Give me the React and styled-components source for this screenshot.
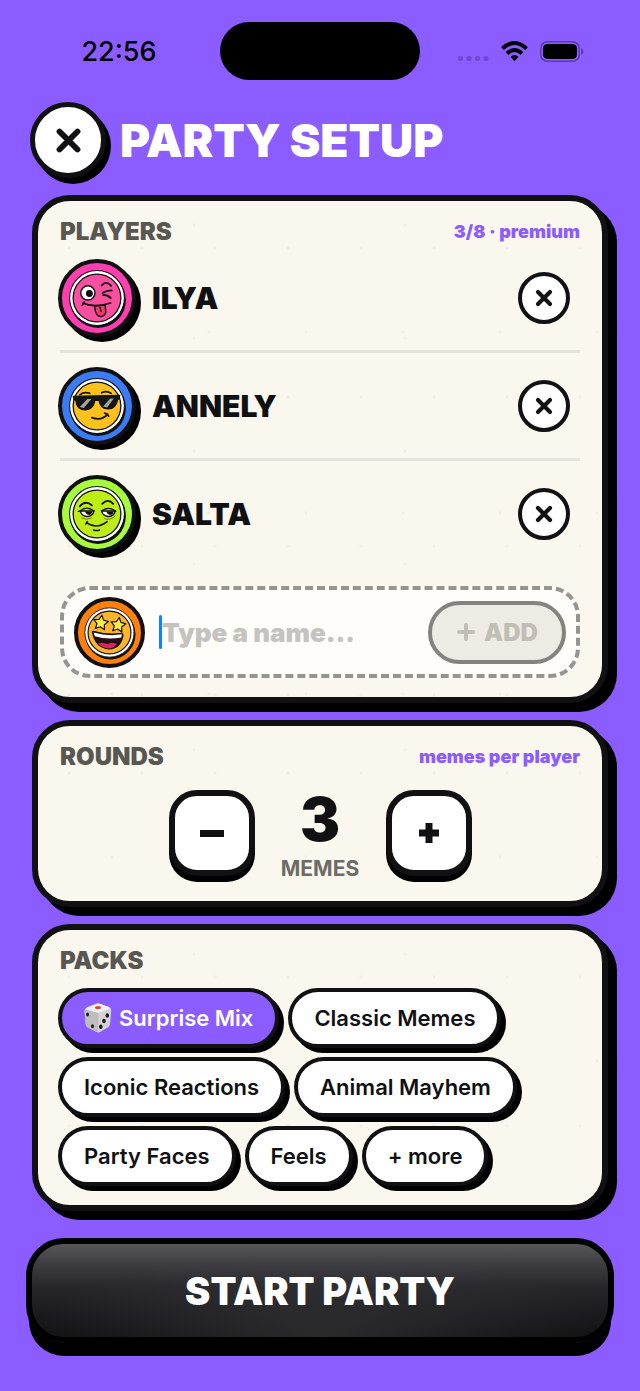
import { useState } from 'react';
import styled, { createGlobalStyle } from 'styled-components';

const GlobalStyle = createGlobalStyle`
  * {
    box-sizing: border-box;
  }
  body {
    margin: 0;
    background-color: #8b5cff;
    font-family: Inter, "Liberation Sans", sans-serif;
    color: #111113;
  }
  button, input {
    font-family: inherit;
    color: inherit;
    padding: 0;
  }
  button {
    cursor: pointer;
  }
`;

const Page = styled.div`
  display: flex;
  flex-direction: column;
  min-height: 100vh;
  padding: 0 32px 48px;
`;
const StatusBar = styled.div`
  display: grid;
  grid-template-columns: 1fr 200px 1fr;
  align-items: center;
  justify-items: center;
  height: 102px;
  margin: 0 -14px;
  color: black;
`;
const Clock = styled.time`
  font-size: 27px;
  font-weight: 500;
`;
const Island = styled.div`
  width: 200px;
  height: 58px;
  border-radius: 29px;
  background-color: black;
`;
const StatusIcons = styled.div`
  display: flex;
  align-items: center;
  gap: 12px;
`;
const TitleRow = styled.header`
  display: flex;
  align-items: center;
  gap: 14px;
  margin: 0 0 17px -2px;
`;
const CloseButton = styled.button`
  display: flex;
  align-items: center;
  justify-content: center;
  flex-shrink: 0;
  width: 76px;
  height: 76px;
  border: 5px solid #111113;
  border-radius: 50%;
  background-color: white;
  box-shadow: 5px 6px 0 black;
`;
const Title = styled.h1`
  margin: 0;
  color: white;
  font-size: 46px;
  line-height: 52px;
  font-weight: 900;
`;
const Card = styled.section`
  margin-bottom: 17px;
  padding: 18px 22px 19px;
  border: 6px solid #111113;
  border-radius: 38px;
  background-color: #faf7ef;
  background-image:
    radial-gradient(circle at 31px 47px, #f0ede5 1px, transparent 2px),
    radial-gradient(circle at 118px 92px, #f0ede5 1px, transparent 2px),
    radial-gradient(circle at 74px 131px, #f0ede5 1px, transparent 2px),
    radial-gradient(circle at 156px 24px, #f0ede5 1px, transparent 2px);
  background-size: 73px 149px, 131px 67px, 97px 181px, 211px 113px;
  box-shadow: 9px 9px 0 black;
`;
const CardHeader = styled.div`
  display: flex;
  align-items: center;
  justify-content: space-between;
  height: 26px;
`;
const CardTitle = styled.h2`
  margin: 0;
  color: #595751;
  font-size: 24px;
  line-height: 26px;
  font-weight: 900;
`;
const CardNote = styled.span`
  color: #8b5cff;
  font-size: 18px;
  line-height: 26px;
  font-weight: 900;
`;
const PlayerList = styled.ul`
  margin: 0 0 20px;
  padding: 0;
  list-style: none;
`;
const PlayerRow = styled.li`
  display: flex;
  align-items: center;
  gap: 16px;
  height: 108px;
  padding-right: 10px;
  border-bottom: 3px solid #e5e3db;
  &:last-child {
    height: 105px;
    border-bottom: none;
  }
`;
const Avatar = styled.span`
  display: flex;
  flex-shrink: 0;
  width: ${(props) => (props.$small ? 71 : 78)}px;
  height: ${(props) => (props.$small ? 71 : 78)}px;
  margin-left: ${(props) => (props.$small ? 0 : -2)}px;
  border: 4px solid #111113;
  border-radius: 50%;
  background-color: ${(props) => props.$color};
  box-shadow: ${(props) => (props.$small ? 'none' : '5px 5px 0 black')};
  svg {
    width: 100%;
    height: 100%;
  }
`;
const PlayerName = styled.span`
  flex: 1;
  font-size: 30px;
  font-weight: 900;
`;
const RemoveButton = styled.button`
  display: flex;
  align-items: center;
  justify-content: center;
  width: 52px;
  height: 52px;
  border: 4px solid #111113;
  border-radius: 50%;
  background-color: white;
`;
const AddPlayer = styled.form`
  display: flex;
  align-items: center;
  height: 92px;
  padding: 0 10px;
  border: 4px dashed #959490;
  border-radius: 30px;
  background-color: #fefdf9;
`;
const Caret = styled.span`
  flex-shrink: 0;
  width: 3px;
  height: 34px;
  margin-left: 14px;
  border-radius: 2px;
  background-color: #0a84ff;
`;
const NameInput = styled.input`
  flex: 1;
  min-width: 0;
  border: none;
  outline: none;
  background: none;
  font-size: 26px;
  font-weight: 900;
  &::placeholder {
    color: #c4c3bf;
    opacity: 1;
  }
`;
const AddButton = styled.button`
  display: flex;
  align-items: center;
  justify-content: center;
  gap: 8px;
  width: 138px;
  height: 63px;
  border: 4px solid #84837f;
  border-radius: 32px;
  background-color: #eeebe4;
  color: #c1beb6;
  font-size: 24px;
  font-weight: 900;
`;
const Stepper = styled.div`
  display: flex;
  align-items: flex-start;
  justify-content: center;
  gap: 26px;
  padding-top: 20px;
`;
const StepButton = styled.button`
  display: flex;
  align-items: center;
  justify-content: center;
  width: 86px;
  height: 86px;
  border: 6px solid #111113;
  border-radius: 28px;
  background-color: white;
  box-shadow: 0 6px 0 black;
`;
const StepValue = styled.div`
  display: flex;
  flex-direction: column;
  align-items: center;
  width: 79px;
`;
const StepNumber = styled.output`
  font-size: 60px;
  line-height: 58px;
  font-weight: 900;
`;
const StepUnit = styled.span`
  margin-top: 8px;
  color: #6d6b66;
  font-size: 21px;
  line-height: 26px;
  font-weight: 700;
`;
const PackList = styled.div`
  display: flex;
  flex-wrap: wrap;
  gap: 9px;
  margin: 14px 0 0 -2px;
`;
const PackChip = styled.button`
  display: flex;
  align-items: center;
  gap: 7px;
  height: 60px;
  padding: 0 22px;
  border: 4px solid #111113;
  border-radius: 30px;
  background-color: ${(props) => (props.$active ? '#8b5cff' : 'white')};
  color: ${(props) => (props.$active ? 'white' : '#111113')};
  font-size: 22px;
  font-weight: 600;
  box-shadow: 5px 5px 0 black;
`;
const StartButton = styled.button`
  height: 105px;
  margin: 10px -6px 0;
  border: 6px solid black;
  border-radius: 38px;
  background:
    radial-gradient(ellipse 50% 90% at 50% 100%, rgba(80, 80, 80, 0.4), transparent),
    linear-gradient(#58585b, #3f3f43 20%, #27272c 45%, #1b1b1f 75%, #111112);
  box-shadow: 0 8px 0 -2px black, 0 16px 0 -3px black;
  color: white;
  font-size: 38px;
  font-weight: 900;
`;

const Cross = ({ size, stroke }) => (
  <svg width={size} height={size} viewBox="0 0 24 24" fill="none" stroke="#111113" strokeWidth={stroke} strokeLinecap="round">
    <path d="M4 4L20 20M20 4L4 20" />
  </svg>
);

const starPoints = (cx, cy, r, turn) => {
  const points = [];
  for (let i = 0; i < 10; i++) {
    const radius = i % 2 ? r * 0.5 : r;
    const angle = ((i * 36 - 90 + turn) * Math.PI) / 180;
    points.push(`${(cx + radius * Math.cos(angle)).toFixed(1)},${(cy + radius * Math.sin(angle)).toFixed(1)}`);
  }
  return points.join(' ');
};

const WinkFace = () => (
  <>
    <circle cx="29.5" cy="33.5" r="7" fill="white" stroke="#111" strokeWidth="1.4" />
    <circle cx="31" cy="34" r="2.9" fill="#111" />
    <path d="M43 26Q48 21 52.5 26.5" strokeWidth="1.8" />
    <path d="M53 31Q48 31 44 33.6M44.5 35.5Q49 35.5 52 38.5" strokeWidth="1.8" />
    <path d="M36 46.5L37 52Q39 57.5 43.5 56.5Q48 55 47 50L46.5 45.5Z" fill="#f0386b" strokeWidth="1.4" />
    <path d="M41.5 47.5L42.5 52" strokeWidth="1.2" />
    <path d="M24.5 43.5Q35 48.5 52 43.5M24 45.5L26 42.5" strokeWidth="1.6" />
  </>
);

const CoolFace = () => (
  <>
    <path d="M21.5 27.5Q25.5 24 31.5 26M43 25.5Q48 23 52.5 26" strokeWidth="1.6" />
    <path d="M15 29L61 28L60.5 31.5L59 32Q57 42 49 41.5Q41.5 41 40.5 33H36.5Q35 42 27 42.5Q18.5 42.5 17.5 33L15.5 32Z" fill="#151515" strokeWidth="1" />
    <path d="M21.5 39.5L29 31.5H33L25.5 40.5ZM44.5 39L51.5 31H55L48.5 40Z" fill="#a2a2a2" stroke="none" />
    <path d="M33.5 50Q43 53.5 49 46.5M46 45.5Q49 46 50 48.5" strokeWidth="1.8" />
  </>
);

const SmugFace = () => (
  <>
    <path d="M21.5 31Q27 24.5 33.5 30M43.5 28.5Q49.5 22.5 54.5 28.5" strokeWidth="1.8" />
    <path d="M22 35.5H35.5Q34.5 41 28.5 41Q23 40.5 22 35.5ZM43 35.5H56.5Q55 41 49.5 41Q44 40.5 43 35.5Z" fill="white" strokeWidth="1.4" />
    <path d="M26.5 36H34Q33 39.5 30.5 39.5Q27.5 39 26.5 36ZM47.5 36H55Q54 39.5 51.5 39.5Q48.5 39 47.5 36Z" fill="#111" stroke="none" />
    <path d="M20 36L22 35.5Q28 30 35.5 35.5M43 35.5Q50 30 57 36" strokeWidth="1.2" />
    <path d="M23.5 42.5Q28 45 33 42.5M46 43Q51 45.5 56.5 40.5" strokeWidth="0.5" />
    <path d="M28 47Q38 54 48.5 46M27.5 48.5L29 46M35 54.2Q38 55.5 41 54.2" strokeWidth="1.5" />
  </>
);

const StarFace = () => (
  <>
    <polygon points={starPoints(29, 28, 8.5, 8)} fill="#ffee3d" strokeWidth="1.3" strokeLinejoin="round" />
    <polygon points={starPoints(48, 30.5, 8.5, 8)} fill="#ffee3d" strokeWidth="1.3" strokeLinejoin="round" />
    <path d="M20 38.5Q19 37 22 37.5Q37 42 52 39.5Q53.5 40 53 43Q50 56 38 56.5Q23 55 20 38.5Z" fill="#241015" strokeWidth="1.4" />
    <path d="M21 38.5Q37 43 52 40.5L51.5 44Q36 47 22.5 42.5Z" fill="white" stroke="none" />
    <path d="M26 50.5Q31 48.5 36 51.5Q41 48.5 46.5 51Q43 56 37.5 56Q30.5 55.5 26 50.5Z" fill="#d9275a" stroke="none" />
  </>
);

const faces = {
  wink: { ring: '#ff3eb0', skin: '#f94f9f', Drawing: WinkFace },
  cool: { ring: '#3b7cf5', skin: '#ffc21c', Drawing: CoolFace },
  smug: { ring: '#a8fb3c', skin: '#bfee16', Drawing: SmugFace },
  stars: { ring: '#ff800a', skin: '#fbb52b', Drawing: StarFace },
};

const PlayerAvatar = ({ face, small }) => {
  const { ring, skin, Drawing } = faces[face];
  return (
    <Avatar $color={ring} $small={small}>
      <svg viewBox="4 4 69 69" fill="none" stroke="#111" strokeLinecap="round" aria-hidden="true">
        <circle cx="39.5" cy="40.5" r="27.5" fill="#111" stroke="none" />
        <circle cx="38.5" cy="38.5" r="27" fill="white" strokeWidth="1" />
        <circle cx="38.5" cy="38.5" r="23.5" fill={skin} strokeWidth="1.3" />
        <Drawing />
      </svg>
    </Avatar>
  );
};

const Dice = () => (
  <svg width="28" height="30" viewBox="0 0 28 30" aria-hidden="true">
    <path d="M3 4.5L12.5 0.8Q14 0.3 15.5 0.8L25 4Q27.5 5 27.2 8L26 21Q25.8 23 24 24.2L16 29Q14.5 29.8 12.5 29L4 24.5Q2 23.5 1.7 21L0.5 8Q0.4 5.5 3 4.5Z" fill="#d4d4d6" />
    <path d="M1.5 6L13 9.5Q14.5 10 14.4 12L14 29.3L4 24.5Q2 23.5 1.7 21L0.5 8Q0.4 6.8 1.5 6Z" fill="#bdbdc0" />
    <path d="M3 4.5L12.5 0.8Q14 0.3 15.5 0.8L25 4Q26.5 5 25 6L16 9.2Q14 10 12 9.2L3 6.5Q1.5 5.5 3 4.5Z" fill="#f0f0f1" />
    <ellipse cx="14" cy="4.6" rx="3" ry="1.6" fill="#e4433a" />
    <g fill="#1b1b1d">
      <ellipse cx="3.6" cy="11.5" rx="1.4" ry="2" />
      <ellipse cx="8.5" cy="23.2" rx="1.4" ry="2" />
      <ellipse cx="23.3" cy="12.5" rx="1.8" ry="2.2" />
      <ellipse cx="20" cy="18" rx="1.8" ry="2.2" />
      <ellipse cx="16.8" cy="23.8" rx="1.8" ry="2.2" />
    </g>
  </svg>
);

const packs = ['Surprise Mix', 'Classic Memes', 'Iconic Reactions', 'Animal Mayhem', 'Party Faces', 'Feels', '+ more'];

function App() {

const [players, updatePlayers] = useState([
  { name: 'ILYA', face: 'wink' },
  { name: 'ANNELY', face: 'cool' },
  { name: 'SALTA', face: 'smug' },
]);
const [name, updateName] = useState('');
const [rounds, updateRounds] = useState(3);
const [selectedPack, onPackSelect] = useState('Surprise Mix');

const addPlayer = (event) => {
  event.preventDefault();
  if (!name.trim() || players.length >= 8) return;
  updatePlayers([...players, { name: name.trim().toUpperCase(), face: 'stars' }]);
  updateName('');
};
const removePlayer = (index) => updatePlayers(players.filter((player, i) => i !== index));

  return (
    <Page>
      <GlobalStyle />
      <StatusBar>
        <Clock>22:56</Clock>
        <Island />
        <StatusIcons>
          <svg width="31" height="21" viewBox="0 0 31 21" fill="#6f4ad0" aria-hidden="true">
            <rect x="0" y="15" width="5" height="5" rx="2" />
            <rect x="8.5" y="15" width="5" height="5" rx="2" />
            <rect x="17" y="15" width="5" height="5" rx="2" />
            <rect x="25.5" y="15" width="5" height="5" rx="2" />
          </svg>
          <svg width="27" height="21" viewBox="0 0 27 21" fill="none" stroke="black" strokeWidth="4" aria-hidden="true">
            <path d="M1.5 7.6Q13.5 -3.6 25.5 7.6" />
            <path d="M6 12.4Q13.5 5.6 21 12.4" />
            <path d="M9.5 15.8Q13.5 12.4 17.5 15.8L13.5 20.2Z" fill="black" stroke="none" />
          </svg>
          <svg width="44" height="21" viewBox="0 0 44 21" aria-hidden="true">
            <rect x="0.75" y="0.75" width="38.5" height="19.5" rx="6.5" fill="none" stroke="#5a3bb2" strokeWidth="1.5" />
            <rect x="3" y="3" width="34" height="15" rx="4.5" fill="black" />
            <path d="M41 7Q43.5 8.5 43.5 10.5Q43.5 12.5 41 14Z" fill="#5a3bb2" />
          </svg>
        </StatusIcons>
      </StatusBar>

      <TitleRow>
        <CloseButton type="button" aria-label="Close">
          <Cross size={27} stroke={5.2} />
        </CloseButton>
        <Title>PARTY SETUP</Title>
      </TitleRow>

      <Card>
        <CardHeader>
          <CardTitle>PLAYERS</CardTitle>
          <CardNote>{players.length}/8 · premium</CardNote>
        </CardHeader>
        <PlayerList>
          {players.map((player, index) => (
            <PlayerRow key={index}>
              <PlayerAvatar face={player.face} />
              <PlayerName>{player.name}</PlayerName>
              <RemoveButton type="button" aria-label={`Remove ${player.name}`} onClick={() => removePlayer(index)}>
                <Cross size={18} stroke={5.6} />
              </RemoveButton>
            </PlayerRow>
          ))}
        </PlayerList>
        <AddPlayer onSubmit={addPlayer}>
          <PlayerAvatar face="stars" small />
          <Caret />
          <NameInput
            aria-label="Player name"
            placeholder="Type a name..."
            value={name}
            onChange={(event) => updateName(event.target.value)}
          />
          <AddButton type="submit">
            <svg width="20" height="20" viewBox="0 0 20 20" stroke="currentColor" strokeWidth="4" strokeLinecap="round" aria-hidden="true">
              <path d="M10 3V17M3 10H17" />
            </svg>
            ADD
          </AddButton>
        </AddPlayer>
      </Card>

      <Card>
        <CardHeader>
          <CardTitle>ROUNDS</CardTitle>
          <CardNote>memes per player</CardNote>
        </CardHeader>
        <Stepper>
          <StepButton type="button" aria-label="Fewer memes" onClick={() => updateRounds(Math.max(1, rounds - 1))}>
            <svg width="24" height="20" viewBox="0 0 24 20" fill="#111113">
              <rect y="7" width="24" height="7" />
            </svg>
          </StepButton>
          <StepValue>
            <StepNumber>{rounds}</StepNumber>
            <StepUnit>MEMES</StepUnit>
          </StepValue>
          <StepButton type="button" aria-label="More memes" onClick={() => updateRounds(rounds + 1)}>
            <svg width="20" height="20" viewBox="0 0 20 20" fill="#111113">
              <path d="M6.5 0H13.5V6.5H20V13.5H13.5V20H6.5V13.5H0V6.5H6.5Z" />
            </svg>
          </StepButton>
        </Stepper>
      </Card>

      <Card>
        <CardHeader>
          <CardTitle>PACKS</CardTitle>
        </CardHeader>
        <PackList>
          {packs.map((pack) => (
            <PackChip
              key={pack}
              type="button"
              $active={pack === selectedPack}
              aria-pressed={pack === selectedPack}
              onClick={() => onPackSelect(pack)}
            >
              {pack === 'Surprise Mix' && <Dice />}
              {pack}
            </PackChip>
          ))}
        </PackList>
      </Card>

      <StartButton type="button">START PARTY</StartButton>
    </Page>
  );
}

export default App;
